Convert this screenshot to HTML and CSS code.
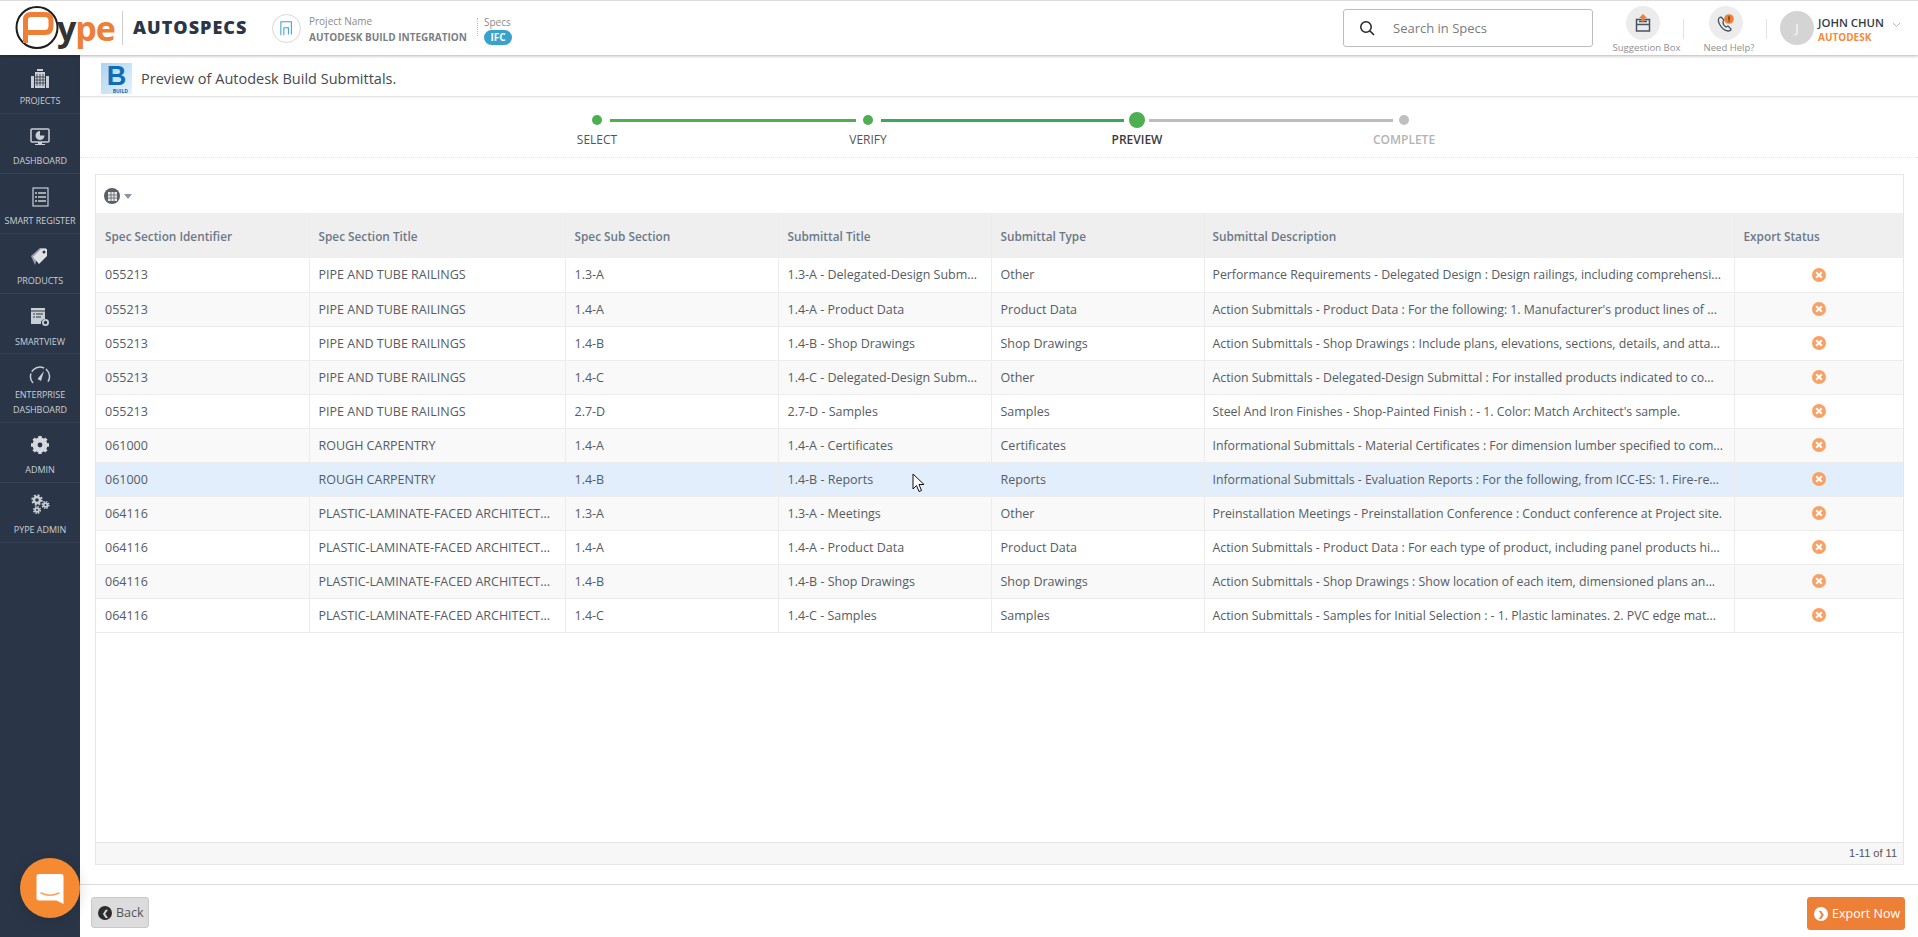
FILE: index.html
```html
<!DOCTYPE html>
<html lang="en">
<head>
<meta charset="utf-8">
<title>Pype AutoSpecs</title>
<link rel="stylesheet" href="styles.css">
</head>
<body>
<header class="topbar">
  <div class="logo">
    <svg class="logo-mark" width="46" height="44" viewBox="0 0 46 44">
      <circle cx="23" cy="21.500" r="20.500" fill="#fff" stroke="#1d1d1d" stroke-width="2"/>
      <path d="M11.500 37V14q0-5.500 5.500-5.500h14q6 0 6 6V20q0 6.500-6 6.500H11.500" fill="none" stroke="#ee7f37" stroke-width="5"/>
    </svg>
    <span class="logo-text"><span class="logo-y">y</span>pe</span>
  </div>
  <div class="brand">AUTOSPECS</div>
  <div class="project-icon">
    <svg width="13" height="15" viewBox="0 0 17 20"><path d="M1 19V1h14v17M5 19V9h6v9" fill="none" stroke="#38a3cf" stroke-width="1.400"/></svg>
  </div>
  <div class="project">
    <span class="meta-label">Project Name</span>
    <strong class="project-name">AUTODESK BUILD INTEGRATION</strong>
  </div>
  <div class="specs">
    <span class="meta-label">Specs</span>
    <span class="badge">IFC</span>
  </div>
  <div class="search">
    <svg width="16" height="16" viewBox="0 0 16 16"><circle cx="7" cy="7" r="5.200" fill="none" stroke="#222" stroke-width="1.500"/><path d="M11 11l4 4" stroke="#222" stroke-width="1.600"/></svg>
    <span class="search-text">Search in Specs</span>
  </div>
  <div class="tool tool-suggest">
    <span class="tool-icon">
      <svg width="16" height="18" viewBox="0 0 16 18"><path d="M1.500 5.500h13v11.500h-13zM1.500 10.500h13M4 7.500h8" fill="none" stroke="#4a5360" stroke-width="1.500"/><path d="M8 0l4 4h-2.500v3.500h-3V4H4z" fill="#ee7f37"/></svg>
    </span>
    <span class="tool-label">Suggestion Box</span>
  </div>
  <div class="tool tool-help">
    <span class="tool-icon">
      <svg width="20" height="20" viewBox="0 0 20 20"><path d="M3 5c-2 3 2 12 9 13 2 0 3-1 3-2l-3-3-2 1c-2-1-3-3-3-5l1-2-3-3z" fill="none" stroke="#4a5360" stroke-width="1.300"/><circle cx="13" cy="6" r="4.800" fill="#ee7f37"/><rect x="12.300" y="3.400" width="1.400" height="3.600" fill="#5a3a20"/><rect x="12.300" y="7.600" width="1.400" height="1.200" fill="#5a3a20"/></svg>
    </span>
    <span class="tool-label">Need Help?</span>
  </div>
  <div class="user">
    <span class="avatar">J</span>
    <div class="user-text">
      <span class="user-name">JOHN CHUN</span>
      <span class="user-org">AUTODESK</span>
    </div>
    <svg class="chevron" width="9" height="6" viewBox="0 0 9 6"><path d="M1 1l3.500 3.500L8 1" fill="none" stroke="#b5b5b5" stroke-width="1"/></svg>
  </div>
</header>

<div class="shell">
  <nav class="sidebar">
    <a class="nav-item nav-a">
      <svg width="20" height="20" viewBox="0 0 20 20"><path d="M7 3h6V1H7zM5 4h10v16H5zM1 8h3v12H1zM16 8h3v12h-3z" fill="#c9ced4"/><path d="M7 6v12M10 6v12M13 6v12M5 9h10M5 12h10M5 15h10" stroke="#2a3647" stroke-width=".8"/></svg>
      <span>PROJECTS</span>
    </a>
    <a class="nav-item nav-b">
      <svg width="20" height="20" viewBox="0 0 20 20"><rect x="1" y="2" width="18" height="13" rx="1" fill="none" stroke="#c9ced4" stroke-width="1.500"/><path d="M10 4a4.500 4.500 0 1 0 4.500 4.500H10z" fill="#c9ced4"/><path d="M8 15h4v2h3v1H5v-1h3z" fill="#c9ced4"/></svg>
      <span>DASHBOARD</span>
    </a>
    <a class="nav-item nav-c">
      <svg width="17" height="20" viewBox="0 0 17 20"><rect x="1" y="1" width="15" height="18" fill="none" stroke="#c9ced4" stroke-width="1.200"/><path d="M6 6h8M6 10h8M6 14h8M3 6h2M3 10h2M3 14h2" stroke="#c9ced4" stroke-width="1.500"/></svg>
      <span>SMART REGISTER</span>
    </a>
    <a class="nav-item nav-d">
      <svg width="20" height="20" viewBox="0 0 20 20"><path d="M1 10L10 2h6v2L7 12 5 19z" fill="#c9ced4" opacity=".7"/><path d="M3 11l8-8h6v7l-8 8z" fill="#e0e3e6"/><circle cx="14" cy="6" r="1.500" fill="#2a3647"/></svg>
      <span>PRODUCTS</span>
    </a>
    <a class="nav-item nav-e">
      <svg width="20" height="20" viewBox="0 0 20 20"><path d="M1 1h14v11a4 4 0 0 0-4 5H1z" fill="#c9ced4"/><path d="M1 4h14" stroke="#2a3647"/><path d="M3 7h2M6 7h7M3 10h2M6 10h5" stroke="#2a3647"/><circle cx="15.500" cy="15.500" r="2.600" fill="none" stroke="#c9ced4" stroke-width="1.800"/></svg>
      <span>SMARTVIEW</span>
    </a>
    <a class="nav-item nav-f">
      <svg width="22" height="18" viewBox="0 0 22 18"><path d="M4 17A9.500 9.500 0 1 1 18 17" fill="none" stroke="#c9ced4" stroke-width="1.500" stroke-dasharray="10 2 14 2 14 2"/><path d="M8.500 13L15 5l-3 10z" fill="#c9ced4"/></svg>
      <span>ENTERPRISE DASHBOARD</span>
    </a>
    <a class="nav-item nav-g">
      <svg width="20" height="20" viewBox="0 0 20 20"><circle cx="10" cy="10" r="5.500" fill="none" stroke="#d5d8dc" stroke-width="4"/><path d="M10 1v18M1 10h18M3.600 3.600l12.800 12.800M16.400 3.600L3.600 16.400" stroke="#d5d8dc" stroke-width="3.400"/><circle cx="10" cy="10" r="2.400" fill="#2a3647"/></svg>
      <span>ADMIN</span>
    </a>
    <a class="nav-item nav-h">
      <svg width="20" height="20" viewBox="0 0 20 20" fill="none" stroke="#c9ced4"><circle cx="7" cy="6" r="3" stroke-width="2.400"/><circle cx="7" cy="6" r="4.800" stroke-width="1.800" stroke-dasharray="2 1.770"/><circle cx="15.500" cy="11" r="1.900" stroke-width="1.800"/><circle cx="15.500" cy="11" r="3.300" stroke-width="1.500" stroke-dasharray="1.500 1.090"/><circle cx="7" cy="16" r="1.900" stroke-width="1.800"/><circle cx="7" cy="16" r="3.300" stroke-width="1.500" stroke-dasharray="1.500 1.090"/></svg>
      <span>PYPE ADMIN</span>
    </a>
  </nav>

  <main class="main">
    <div class="subhead">
      <span class="build-logo"><b>B</b><i>BUILD</i></span>
      <h1>Preview of Autodesk Build Submittals.</h1>
    </div>

    <div class="stepper">
      <div class="step done"><span class="dot"></span><span class="step-label">SELECT</span></div>
      <span class="rail rail-one"></span>
      <div class="step done"><span class="dot"></span><span class="step-label">VERIFY</span></div>
      <span class="rail rail-two"></span>
      <div class="step current"><span class="dot"></span><span class="step-label">PREVIEW</span></div>
      <span class="rail rail-three"></span>
      <div class="step todo"><span class="dot"></span><span class="step-label">COMPLETE</span></div>
    </div>

    <section class="grid-card">
      <div class="grid-toolbar">
        <span class="col-btn"><svg width="9" height="9" viewBox="0 0 9 9"><path d="M0 0h9v9H0z" fill="#e8e8ea"/><path d="M3 0v9M6 0v9M0 3h9M0 6h9" stroke="#5b5f6a" stroke-width=".8"/></svg></span>
        <span class="caret"></span>
      </div>
      <div class="grid-body">
        <table class="grid">
          <colgroup>
            <col class="c1"><col class="c2"><col class="c3"><col class="c4"><col class="c5"><col class="c6"><col class="c7">
          </colgroup>
          <thead>
            <tr><th>Spec Section Identifier</th><th>Spec Section Title</th><th>Spec Sub Section</th><th>Submittal Title</th><th>Submittal Type</th><th>Submittal Description</th><th>Export Status</th></tr>
          </thead>
          <tbody>
            <tr><td>055213</td><td>PIPE AND TUBE RAILINGS</td><td>1.3-A</td><td>1.3-A - Delegated-Design Subm...</td><td>Other</td><td>Performance Requirements - Delegated Design : Design railings, including comprehensi...</td><td class="st"><span class="x"></span></td></tr>
            <tr><td>055213</td><td>PIPE AND TUBE RAILINGS</td><td>1.4-A</td><td>1.4-A - Product Data</td><td>Product Data</td><td>Action Submittals - Product Data : For the following: 1. Manufacturer's product lines of ...</td><td class="st"><span class="x"></span></td></tr>
            <tr><td>055213</td><td>PIPE AND TUBE RAILINGS</td><td>1.4-B</td><td>1.4-B - Shop Drawings</td><td>Shop Drawings</td><td>Action Submittals - Shop Drawings : Include plans, elevations, sections, details, and atta...</td><td class="st"><span class="x"></span></td></tr>
            <tr><td>055213</td><td>PIPE AND TUBE RAILINGS</td><td>1.4-C</td><td>1.4-C - Delegated-Design Subm...</td><td>Other</td><td>Action Submittals - Delegated-Design Submittal : For installed products indicated to co...</td><td class="st"><span class="x"></span></td></tr>
            <tr><td>055213</td><td>PIPE AND TUBE RAILINGS</td><td>2.7-D</td><td>2.7-D - Samples</td><td>Samples</td><td>Steel And Iron Finishes - Shop-Painted Finish : - 1. Color: Match Architect's sample.</td><td class="st"><span class="x"></span></td></tr>
            <tr><td>061000</td><td>ROUGH CARPENTRY</td><td>1.4-A</td><td>1.4-A - Certificates</td><td>Certificates</td><td>Informational Submittals - Material Certificates : For dimension lumber specified to com...</td><td class="st"><span class="x"></span></td></tr>
            <tr class="hover"><td>061000</td><td>ROUGH CARPENTRY</td><td>1.4-B</td><td>1.4-B - Reports</td><td>Reports</td><td>Informational Submittals - Evaluation Reports : For the following, from ICC-ES: 1. Fire-re...</td><td class="st"><span class="x"></span></td></tr>
            <tr><td>064116</td><td>PLASTIC-LAMINATE-FACED ARCHITECT...</td><td>1.3-A</td><td>1.3-A - Meetings</td><td>Other</td><td>Preinstallation Meetings - Preinstallation Conference : Conduct conference at Project site.</td><td class="st"><span class="x"></span></td></tr>
            <tr><td>064116</td><td>PLASTIC-LAMINATE-FACED ARCHITECT...</td><td>1.4-A</td><td>1.4-A - Product Data</td><td>Product Data</td><td>Action Submittals - Product Data : For each type of product, including panel products hi...</td><td class="st"><span class="x"></span></td></tr>
            <tr><td>064116</td><td>PLASTIC-LAMINATE-FACED ARCHITECT...</td><td>1.4-B</td><td>1.4-B - Shop Drawings</td><td>Shop Drawings</td><td>Action Submittals - Shop Drawings : Show location of each item, dimensioned plans an...</td><td class="st"><span class="x"></span></td></tr>
            <tr><td>064116</td><td>PLASTIC-LAMINATE-FACED ARCHITECT...</td><td>1.4-C</td><td>1.4-C - Samples</td><td>Samples</td><td>Action Submittals - Samples for Initial Selection : - 1. Plastic laminates. 2. PVC edge mat...</td><td class="st"><span class="x"></span></td></tr>
          </tbody>
        </table>
      </div>
      <div class="pager">1-11 of 11</div>
    </section>

    <footer class="actions">
      <button class="btn btn-back" type="button"><span class="arrow">&#10094;</span>Back</button>
      <button class="btn btn-export" type="button"><span class="arrow">&#10095;</span>Export Now</button>
    </footer>
  </main>
</div>

<svg class="cursor" width="14" height="21" viewBox="0 0 14 21"><path d="M1 1v15l3.500-3.500 2.500 6 2.500-1-2.500-6h5z" fill="#fff" stroke="#111" stroke-width="1"/></svg>

<div class="chat">
  <svg width="28" height="31" viewBox="0 0 28 31"><path d="M3 1h22a2.500 2.500 0 0 1 2.500 2.500V31l-7-3.500H3A2.500 2.500 0 0 1 .5 25V3.500A2.500 2.500 0 0 1 3 1z" fill="#fff"/><path d="M5 20q9 4.500 18 0" fill="none" stroke="#f7a561" stroke-width="1.500" stroke-linecap="round"/></svg>
</div>
</body>
</html>
```
FILE: styles.css
```css
* { box-sizing: border-box; }
html, body { margin: 0; height: 100%; overflow: hidden; }
body {
  font-family: "Open Sans", "Liberation Sans", sans-serif;
  font-size: 12px;
  color: #4c5560;
  background: #fff;
  display: flex;
  flex-direction: column;
  height: 937px;
}

/* top bar */
.topbar {
  height: 55px;
  flex: none;
  display: flex;
  align-items: center;
  background: #fff;
  border-top: 1px solid #dcdcdc;
  box-shadow: 0 1px 3px rgba(0,0,0,.3);
  position: relative;
  z-index: 3;
}
.logo {
  width: 108px;
  margin-left: 14px;
  height: 44px;
  display: flex;
  align-items: center;
  flex: none;
}
.logo-mark { flex: none; }
.logo-text {
  margin: -1px 0 0 -3px;
  font-size: 34px;
  font-weight: 700;
  letter-spacing: -1px;
  line-height: 44px;
  color: #ee7f37;
}
.logo-y { color: #333; }
.brand {
  border-left: 1px solid #ccc;
  height: 34px;
  line-height: 33px;
  padding-left: 10px;
  font-size: 18px;
  font-weight: 800;
  color: #2a3647;
  letter-spacing: 1px;
  width: 150px;
  flex: none;
}
.project-icon {
  width: 29px;
  height: 29px;
  border-radius: 50%;
  border: 1px solid #d8d8d8;
  display: flex;
  align-items: center;
  justify-content: center;
  flex: none;
  margin-right: 8px;
}
.project, .specs { display: flex; flex-direction: column; flex: none; }
.project { width: 168px; padding-top: 3px; }
.meta-label { font-size: 10px; line-height: 14px; color: #8b8b8b; }
.project-name { font-size: 10px; font-weight: 700; color: #7a7f85; line-height: 18px; white-space: nowrap; }
.specs {
  border-left: 1px dotted #bbb;
  padding-left: 6px;
  height: 18px;
  margin-top: -2px;
  align-items: flex-start;
}
.specs .meta-label { margin-top: -3px; }
.badge {
  background: #37a2cb;
  color: #fff;
  font-size: 10px;
  font-weight: 700;
  width: 28px;
  height: 15px;
  line-height: 15px;
  text-align: center;
  border-radius: 8px;
  margin-top: 1px;
}
.search {
  margin-left: auto;
  width: 250px;
  height: 38px;
  border: 1px solid #bdbdbd;
  border-radius: 3px;
  display: flex;
  align-items: center;
  padding-left: 15px;
  gap: 18px;
  flex: none;
}
.search-text { font-size: 13px; color: #7b7b7b; }
.tool {
  display: flex;
  flex-direction: column;
  align-items: center;
  flex: none;
  position: relative;
  align-self: flex-start;
  margin-top: 5px;
}
.tool-suggest { width: 82px; margin-left: 9px; }
.tool-help { width: 83px; }
.tool-suggest::after, .tool-help::after {
  content: "";
  position: absolute;
  right: 0;
  top: 13px;
  height: 20px;
  border-right: 1px solid #e2e2e2;
}
.tool-icon {
  width: 34px;
  height: 34px;
  border-radius: 50%;
  background: #ececec;
  display: flex;
  align-items: center;
  justify-content: center;
}
.tool-label { font-size: 9.500px; line-height: 13px; color: #8f8f8f; white-space: nowrap; margin: 1px 0 0 7px; }
.user {
  display: flex;
  align-items: center;
  width: 151px;
  padding-left: 13px;
  flex: none;
}
.avatar {
  width: 34px;
  height: 34px;
  border-radius: 50%;
  background: #d4d4d4;
  color: #f1f1f1;
  font-size: 13px;
  font-weight: 600;
  display: flex;
  align-items: center;
  justify-content: center;
  flex: none;
}
.user-text { display: flex; flex-direction: column; margin: 3px 0 0 4px; width: 74px; }
.user-name { font-size: 11.400px; font-weight: 600; line-height: 15px; color: #333d47; white-space: nowrap; }
.user-org { font-size: 10px; font-weight: 700; line-height: 15px; color: #f58b3c; }
.chevron { margin-top: -6px; }

/* shell */
.shell { flex: 1; display: flex; min-height: 0; }
.sidebar {
  width: 80px;
  flex: none;
  background: #2a3647;
  display: flex;
  flex-direction: column;
}
.nav-item {
  display: flex;
  flex-direction: column;
  align-items: center;
  border-bottom: 1px solid #344052;
  color: #c9ced4;
  font-size: 9px;
  line-height: 15px;
  text-align: center;
  white-space: nowrap;
  letter-spacing: -.05px;
}
.nav-item svg { flex: none; }
.nav-a { height: 59px; padding-top: 13px; }
.nav-a svg { margin-bottom: 5px; }
.nav-b { height: 60px; padding-top: 13px; }
.nav-b svg { margin-bottom: 6px; }
.nav-c { height: 60px; padding-top: 13px; }
.nav-c svg { margin-bottom: 6px; }
.nav-d { height: 60px; padding-top: 12px; }
.nav-d svg { margin-bottom: 7px; }
.nav-e { height: 60px; padding-top: 13px; }
.nav-e svg { margin-bottom: 7px; }
.nav-f { height: 69px; padding-top: 12px; white-space: normal; }
.nav-f svg { margin-bottom: 3px; }
.nav-g { height: 60px; padding-top: 12px; }
.nav-g svg { margin-bottom: 7px; }
.nav-h { height: 60px; padding-top: 11px; }
.nav-h svg { margin-bottom: 8px; }

.main { flex: 1; min-width: 0; display: flex; flex-direction: column; }
.subhead {
  height: 42px;
  flex: none;
  display: flex;
  align-items: center;
  padding: 5px 0 0 21px;
  border-bottom: 1px solid #e6e6e6;
  box-shadow: 0 1px 2px rgba(0,0,0,.06);
}
.build-logo {
  width: 31px;
  height: 31px;
  background: linear-gradient(135deg, #a9d4f1, #e6f3fb);
  display: block;
  flex: none;
  text-align: center;
}
.build-logo b {
  display: block;
  font-family: "Liberation Sans", sans-serif;
  font-size: 27px;
  line-height: 26px;
  font-weight: 700;
  color: #0f6cb5;
}
.build-logo i {
  display: block;
  font-style: normal;
  font-size: 5px;
  font-weight: 700;
  line-height: 5px;
  color: #0f6cb5;
  text-align: right;
  padding-right: 4px;
}
h1 {
  margin: 0 0 0 9px;
  font-size: 14.500px;
  font-weight: 400;
  color: #454a50;
}

/* stepper */
.stepper {
  height: 61px;
  flex: none;
  border-bottom: 1px dotted #e4e4e4;
  display: flex;
  justify-content: center;
  padding: 18px 0 0 3px;
}
.step {
  flex: none;
  display: flex;
  flex-direction: column;
  align-items: center;
  position: relative;
}
.dot {
  width: 10px;
  height: 10px;
  border-radius: 50%;
  background: #4caf50;
  flex: none;
}
.current .dot { width: 16px; height: 16px; margin-top: -3px; }
.todo .dot { background: #bfbfbf; }
.step-label {
  position: absolute;
  top: 17px;
  font-size: 12px;
  line-height: 16px;
  color: #555;
  white-space: nowrap;
}
.current .step-label { font-weight: 600; color: #3b3b3b; }
.todo .step-label { color: #b3b3b3; font-weight: 600; }
.rail { height: 3px; margin-top: 4px; background: #bdbdbd; flex: none; }
.rail-one { width: 246px; margin-left: 8px; margin-right: 7px; background: #4caf50; }
.rail-two { width: 243px; margin-left: 8px; margin-right: 5px; background: #34ad5b; }
.rail-three { width: 244px; margin-left: 4px; margin-right: 6px; }

/* grid */
.grid-card {
  margin: 16px 14px 0 15px;
  height: 691px;
  flex: none;
  border: 1px solid #e6e6e6;
  display: flex;
  flex-direction: column;
}
.grid-toolbar {
  height: 38px;
  flex: none;
  display: flex;
  align-items: center;
  padding: 4px 0 0 8px;
  gap: 4px;
}
.col-btn {
  width: 16px;
  height: 16px;
  border-radius: 50%;
  background: #5b5f6a;
  display: flex;
  align-items: center;
  justify-content: center;
}
.caret {
  width: 0;
  height: 0;
  border: 4px solid transparent;
  border-top: 5px solid #8a94a6;
  border-bottom: 0;
}
.grid-body { flex: 1; min-height: 0; }
.grid { width: 1807px; border-collapse: collapse; table-layout: fixed; }
.c1 { width: 213px; } .c2 { width: 256px; } .c3 { width: 213px; } .c4 { width: 213px; }
.c5 { width: 213px; } .c6 { width: 530px; } .c7 { width: 169px; }
th, td {
  padding: 0 4px 0 9px;
  text-align: left;
  overflow: hidden;
  white-space: nowrap;
  border-right: 1px solid #ececec;
}
th:last-child, td:last-child { border-right: 0; }
th {
  height: 45px;
  background: #efefef;
  font-size: 11.800px;
  font-weight: 600;
  color: #6c7889;
  box-shadow: 0 1px 2px rgba(0,0,0,.1);
}
td {
  height: 34px;
  font-size: 12.500px;
  border-bottom: 1px solid #ececec;
  color: #555c64;
}
th:nth-child(6), td:nth-child(6) { padding-left: 8px; }
td:nth-child(6) { font-size: 12.300px; }
tbody tr:nth-child(even) td { background: #f9f9f9; }
tbody tr.hover td { background: #e3eefd; }
td.st { text-align: center; padding: 0; }
.x {
  display: inline-block;
  width: 14px;
  height: 14px;
  border-radius: 50%;
  background: #f9a164;
  position: relative;
  top: -1px;
  vertical-align: middle;
}
.x::before, .x::after {
  content: "";
  position: absolute;
  left: 3px;
  top: 6px;
  width: 8px;
  height: 2px;
  background: #fff;
  transform: rotate(45deg);
}
.x::after { transform: rotate(-45deg); }
.pager {
  height: 22px;
  flex: none;
  background: #f7f7f7;
  border-top: 1px solid #e3e3e3;
  font-family: "Liberation Sans", sans-serif;
  font-size: 11px;
  line-height: 21px;
  color: #555;
  text-align: right;
  padding-right: 6px;
}

/* footer */
.actions {
  margin-top: 19px;
  flex: 1;
  border-top: 1px solid #dcdcdc;
  display: flex;
  justify-content: space-between;
  align-items: flex-start;
  padding: 12px 13px 0 11px;
}
.btn {
  border-radius: 3px;
  font-family: inherit;
  font-size: 12.500px;
  white-space: nowrap;
  display: flex;
  align-items: center;
  gap: 4px;
  padding: 0 6px;
}
.btn-back { width: 58px; height: 31px; background: #dcdcdc; border: 1px solid #c9c9c9; color: #555; }
.btn-export { width: 98px; height: 33px; background: #ee7f37; border: 1px solid #ee7f37; color: #fff; }
.arrow {
  width: 14px;
  height: 14px;
  border-radius: 50%;
  font-size: 8px;
  line-height: 14px;
  font-weight: 700;
  text-align: center;
  flex: none;
}
.btn-back .arrow { background: #2b2b2b; color: #dcdcdc; }
.btn-export .arrow { background: #fff; color: #ee7f37; }

/* overlays */
.cursor { position: absolute; left: 912px; top: 473px; z-index: 5; }
.chat {
  position: absolute;
  left: 20px;
  top: 858px;
  width: 60px;
  height: 60px;
  border-radius: 50%;
  background: #f58a33;
  display: flex;
  align-items: center;
  justify-content: center;
  box-shadow: 0 2px 14px rgba(0,0,0,.16);
  z-index: 4;
}
```
